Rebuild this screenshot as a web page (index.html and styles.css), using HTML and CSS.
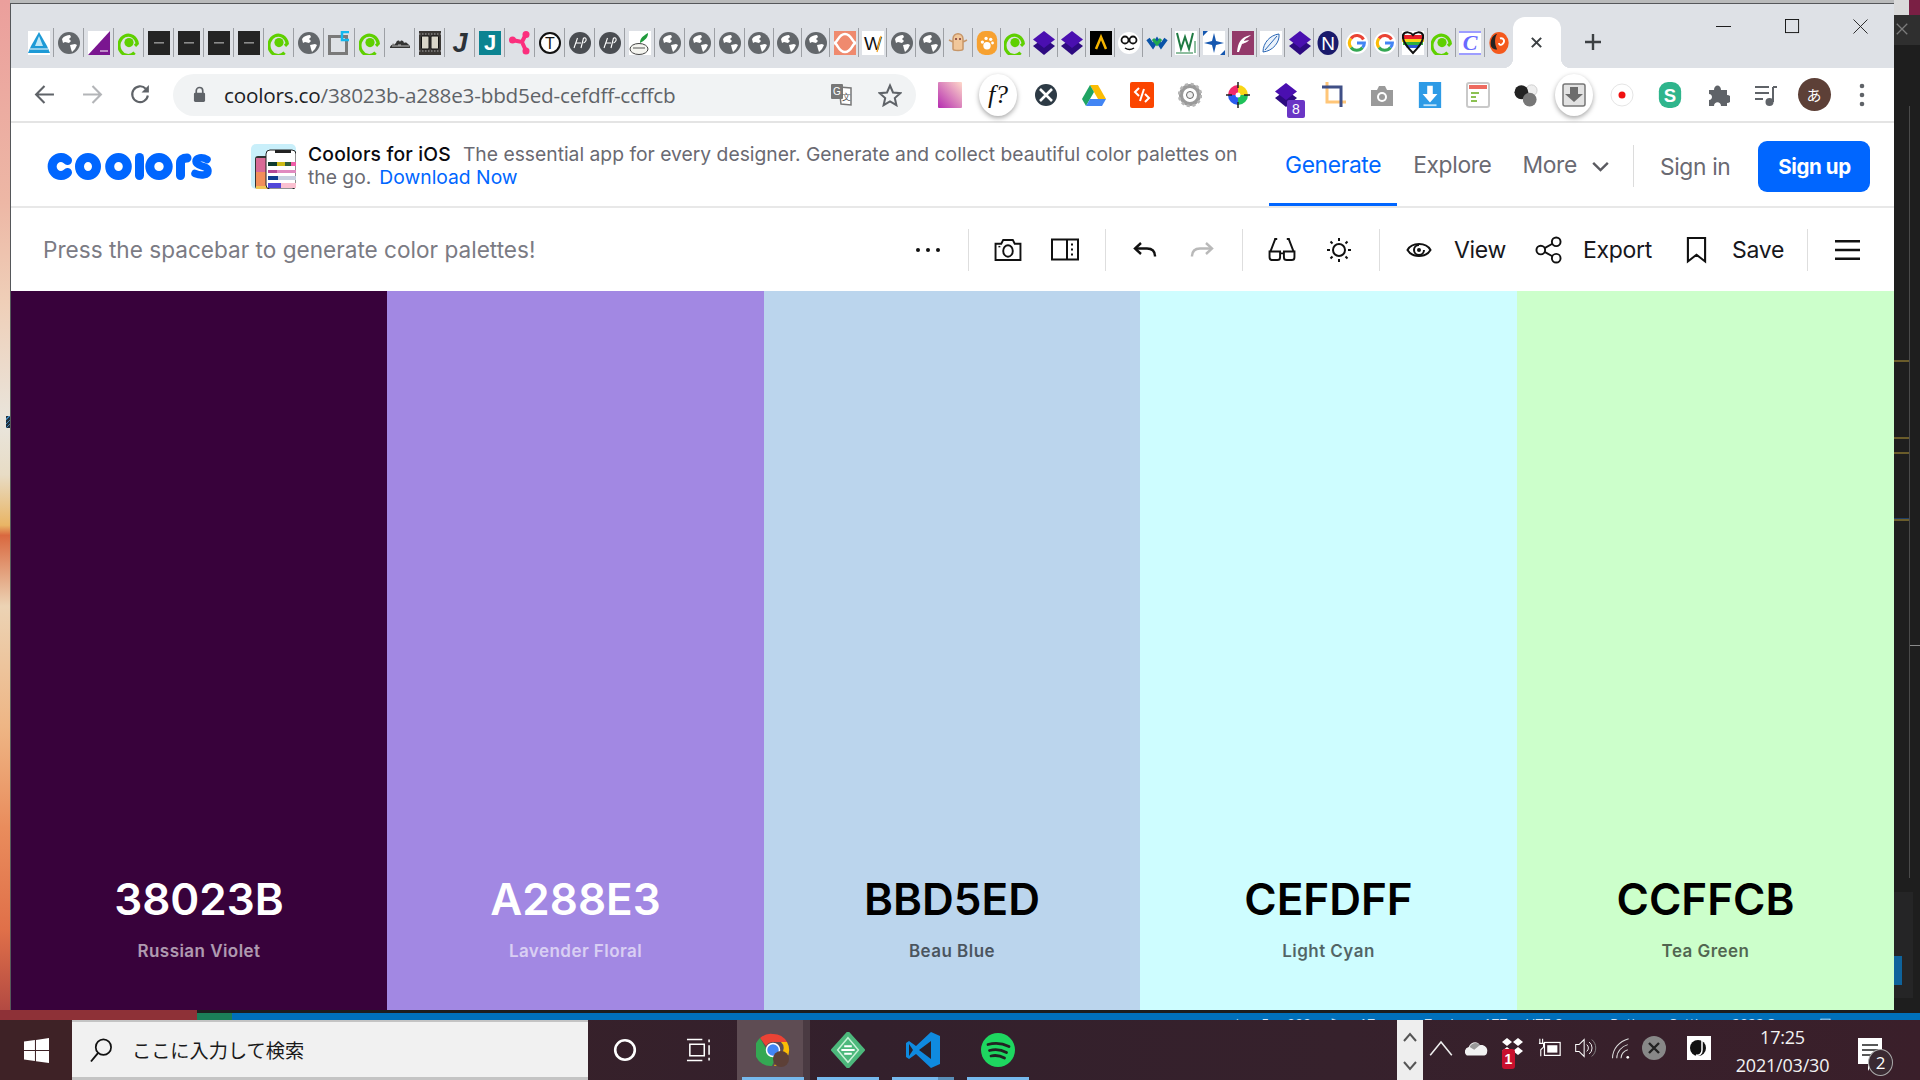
FILE: index.html
```html
<!DOCTYPE html>
<html lang="en">
<head>
<meta charset="utf-8">
<title>Coolors</title>
<link rel="stylesheet" href="styles.css">
</head>
<body>
<svg class="defs" width="0" height="0" aria-hidden="true">
  <defs>
    <symbol id="globe" viewBox="0 0 22 22"><circle cx="11" cy="11" r="11" fill="#63676b"/><path d="M4 7c2-3 5-4 8-4l1 2-2 2 2 2-2 2-4-1-2 1zM12 13l5-1 2 1-2 4-3 3-1-3z" fill="#fff"/></symbol>
    <symbol id="at" viewBox="0 0 22 26"><path d="M17 23.500A10 11 0 1 1 20 13.500L17.500 16" fill="none" stroke="#5fd000" stroke-width="3.400"/><circle cx="11" cy="12.500" r="5" fill="#5fd000"/></symbol>
    <symbol id="dash" viewBox="0 0 22 24"><rect width="22" height="24" fill="#242424"/><rect x="6" y="11" width="10" height="1.600" fill="#8b8b8b"/></symbol>
    <symbol id="stack" viewBox="0 0 22 24"><path d="M11 7 22 15 11 24 0 15z" fill="#2d0a80"/><path d="M11 0 22 8.500 11 17 0 8.500z" fill="#4a0fb0"/></symbol>
    <symbol id="hp" viewBox="0 0 22 22"><circle cx="11" cy="11" r="11" fill="#4a4d52"/><path d="M5 16 8.500 6M7 11h5M12 16 14.500 6M14.500 6c3-1 4 3 0 5" fill="none" stroke="#fff" stroke-width="1.100"/></symbol>
    <symbol id="gg" viewBox="0 0 22 22"><circle cx="11" cy="11" r="11" fill="#fff"/><path d="M17.500 7.500A7.400 7.400 0 0 0 5 6.500" fill="none" stroke="#ea4335" stroke-width="3"/><path d="M5 6.500a7.400 7.400 0 0 0 0 9" fill="none" stroke="#fbbc05" stroke-width="3"/><path d="M5 15.500a7.400 7.400 0 0 0 11.500 0" fill="none" stroke="#34a853" stroke-width="3"/><path d="M16.500 15.500c1.300-1.300 1.900-3 1.900-4.500H11" fill="none" stroke="#4285f4" stroke-width="3"/></symbol>
    <symbol id="drop" viewBox="0 0 22 24"><rect width="22" height="24" fill="#fff"/><path d="M11 1 19 15 22 22 0 22 3 15z" fill="#1d9ad6"/><path d="M11 5 15 15H7z" fill="#bfe8f7"/><path d="M2 18h18" stroke="#fff" stroke-width="1"/></symbol>
    <symbol id="chk" viewBox="0 0 22 24"><rect width="22" height="24" fill="#fff"/><path d="M22 0V24H0z" fill="#7a1690"/><path d="M12 20h8" stroke="#fff"/></symbol>
    <symbol id="sq" viewBox="0 0 22 24"><rect x="1.500" y="5.500" width="17" height="17" fill="none" stroke="#7a7a7a" stroke-width="3"/><path d="M21 1h-7v8h7" fill="none" stroke="#12b8f0" stroke-width="2.500"/></symbol>
  </defs>
</svg>

<div class="screen">
  <div class="upper">
    <div class="wall"></div>
    <div class="middle">
      <div class="behind"></div>
      <main class="window">
        <div class="tabstrip">
          <div class="tab"><svg class="fav"><use href="#drop"/></svg></div>
          <div class="tab"><svg class="fav"><use href="#globe"/></svg></div>
          <div class="tab"><svg class="fav"><use href="#chk"/></svg></div>
          <div class="tab"><svg class="fav"><use href="#at"/></svg></div>
          <div class="tab"><svg class="fav"><use href="#dash"/></svg></div>
          <div class="tab"><svg class="fav"><use href="#dash"/></svg></div>
          <div class="tab"><svg class="fav"><use href="#dash"/></svg></div>
          <div class="tab"><svg class="fav"><use href="#dash"/></svg></div>
          <div class="tab"><svg class="fav"><use href="#at"/></svg></div>
          <div class="tab"><svg class="fav"><use href="#globe"/></svg></div>
          <div class="tab"><svg class="fav"><use href="#sq"/></svg></div>
          <div class="tab"><svg class="fav"><use href="#at"/></svg></div>
          <div class="tab"><svg class="fav" viewBox="0 0 22 24"><path d="M1 17c0-3 2-2 3-5 1 2 2 1 3 0 1-3 3-3 4-1 1-2 3-2 4 1 2-1 3 0 4 1 2 1 2 3 2 4H1z" fill="#333"/><path d="M3 15h17M3 13h3M9 14h3" stroke="#ddd" stroke-width=".8"/></svg></div>
          <div class="tab"><svg class="fav" viewBox="0 0 22 24"><rect width="22" height="24" fill="#3a3734"/><rect x="2.500" y="5" width="7.500" height="13" rx="1" fill="#d9d5c8" stroke="#111"/><rect x="12" y="5" width="7.500" height="13" rx="1" fill="#d9d5c8" stroke="#111"/><path d="M0 3h22M0 20h22" stroke="#aaa" stroke-dasharray="1.500 1.500"/></svg></div>
          <div class="tab"><svg class="fav" viewBox="0 0 22 24"><text class="fb" x="11" y="21" fill="#2c3238" font-size="27" font-style="italic">J</text></svg></div>
          <div class="tab"><svg class="fav" viewBox="0 0 22 24"><rect width="22" height="24" fill="#0b8391"/><text class="fb" x="11" y="19" fill="#fff" font-size="22">J</text></svg></div>
          <div class="tab"><svg class="fav" viewBox="0 0 22 24"><path d="M3 9 13 11 17 3M13 11 17 20" fill="none" stroke="#fb2f7d" stroke-width="4"/><circle cx="3.500" cy="9" r="3.500" fill="#fb2f7d"/><circle cx="17" cy="3.500" r="3.500" fill="#fb2f7d"/><circle cx="17" cy="20" r="3.500" fill="#fb2f7d"/></svg></div>
          <div class="tab"><svg class="fav" viewBox="0 0 22 22"><circle cx="11" cy="11" r="10" fill="#fff" stroke="#111" stroke-width="2"/><text class="fl" x="11" y="17" fill="#111" font-size="16">T</text></svg></div>
          <div class="tab"><svg class="fav"><use href="#hp"/></svg></div>
          <div class="tab"><svg class="fav"><use href="#hp"/></svg></div>
          <div class="tab"><svg class="fav" viewBox="0 0 22 24"><rect width="22" height="24" fill="#fff"/><ellipse cx="10" cy="18" rx="9" ry="5.500" fill="#f5f5f0" stroke="#444"/><path d="M11 12C11 7 14 5 19 2 19 7 16 9 11 12z" fill="#1f9a3b"/><path d="M4 17h12" stroke="#555"/></svg></div>
          <div class="tab"><svg class="fav"><use href="#globe"/></svg></div>
          <div class="tab"><svg class="fav"><use href="#globe"/></svg></div>
          <div class="tab"><svg class="fav"><use href="#globe"/></svg></div>
          <div class="tab tab-n"><svg class="fav"><use href="#globe"/></svg></div>
          <div class="tab tab-n"><svg class="fav"><use href="#globe"/></svg></div>
          <div class="tab tab-n"><svg class="fav"><use href="#globe"/></svg></div>
          <div class="tab tab-n"><svg class="fav" viewBox="0 0 22 24"><rect width="22" height="24" fill="#ef8a6e"/><path d="M0 12C4 12 4 3 11 3s7 9 11 9c-4 0-4 9-11 9S4 12 0 12z" fill="none" stroke="#fff" stroke-width="2.500"/></svg></div>
          <div class="tab tab-n"><svg class="fav" viewBox="0 0 22 24"><rect width="22" height="24" fill="#fff"/><text class="fl" x="11" y="19" fill="#111" font-size="19">W</text><path d="M15 21 19 5" stroke="#f0a020" stroke-width="1.300"/></svg></div>
          <div class="tab tab-n"><svg class="fav"><use href="#globe"/></svg></div>
          <div class="tab tab-n"><svg class="fav"><use href="#globe"/></svg></div>
          <div class="tab tab-n"><svg class="fav" viewBox="0 0 22 24"><path d="M6 18V8c0-7 10-7 10 0v10c0 2-10 2-10 0zM6 11 2 9M16 11l4-2" fill="#f1c79a" stroke="#c79668" stroke-width="1.500"/><circle cx="9" cy="8" r="1" fill="#733"/><circle cx="13" cy="8" r="1" fill="#733"/></svg></div>
          <div class="tab tab-n"><svg class="fav" viewBox="0 0 22 26"><rect width="22" height="26" rx="9" fill="#f7a130"/><circle cx="11" cy="16" r="4" fill="#fff"/><circle cx="6" cy="12" r="1.800" fill="#fff"/><circle cx="10" cy="8" r="1.800" fill="#fff"/><circle cx="15" cy="9" r="1.800" fill="#fff"/><circle cx="17" cy="13" r="1.500" fill="#fff"/></svg></div>
          <div class="tab tab-n"><svg class="fav"><use href="#at"/></svg></div>
          <div class="tab tab-n"><svg class="fav"><use href="#stack"/></svg></div>
          <div class="tab tab-n"><svg class="fav"><use href="#stack"/></svg></div>
          <div class="tab tab-n"><svg class="fav" viewBox="0 0 22 24"><rect width="22" height="24" fill="#000"/><path d="M6 18 11 6 16 18" fill="none" stroke="#f5b400" stroke-width="2.500"/></svg></div>
          <div class="tab tab-n"><svg class="fav" viewBox="0 0 22 22"><circle cx="11" cy="11" r="11" fill="#fff"/><circle cx="7" cy="8" r="3.500" fill="none" stroke="#111" stroke-width="1.800"/><circle cx="15" cy="8" r="3.500" fill="none" stroke="#111" stroke-width="1.800"/><path d="M7 16c3 2 6 2 9 0" fill="none" stroke="#111" stroke-width="1.500"/></svg></div>
          <div class="tab tab-n"><svg class="fav" viewBox="0 0 22 22"><path d="M2 7 7 14 11 8 15 14 20 7" fill="none" stroke="#0a53a8" stroke-width="4"/><path d="M7 7 11 12 15 7" fill="none" stroke="#1fa84f" stroke-width="3"/></svg></div>
          <div class="tab tab-n"><svg class="fav" viewBox="0 0 22 24"><rect width="22" height="24" fill="#fff"/><path d="M2 2 6 18 10 6 14 18 18 2" fill="none" stroke="#1f7a43" stroke-width="2"/><path d="M20 10V22M1 22H18" stroke="#6aa980" stroke-width="1.500"/></svg></div>
          <div class="tab tab-n"><svg class="fav" viewBox="0 0 22 24"><rect width="22" height="24" fill="#fff"/><path d="M11 2 13 10 21 12 13 14 11 22 9 14 1 12 9 10z" fill="#1557b0"/><path d="M0 0h5L0 5zM22 24h-5l5-5z" fill="#1557b0"/></svg></div>
          <div class="tab tab-n"><svg class="fav" viewBox="0 0 22 24"><rect width="22" height="24" fill="#933a6a"/><path d="M5 21C6 12 8 6 19 4 16 7 13 7 12 10l5-1c-2 3-5 3-7 4l-3 8z" fill="#fff"/></svg></div>
          <div class="tab tab-n"><svg class="fav" viewBox="0 0 22 24"><rect width="22" height="24" fill="#fff"/><path d="M3 21C3 12 10 4 19 3c1 8-6 17-16 18z" fill="#eaf2fb" stroke="#2a66b4"/><path d="M5 19 17 5" stroke="#2a66b4"/></svg></div>
          <div class="tab tab-n"><svg class="fav"><use href="#stack"/></svg></div>
          <div class="tab tab-n"><svg class="fav" viewBox="0 0 22 24"><ellipse cx="11" cy="12" rx="10.500" ry="12" fill="#1a1a6b"/><text class="fl" x="11" y="19" fill="#fff" font-size="19">N</text></svg></div>
          <div class="tab tab-n"><svg class="fav"><use href="#gg"/></svg></div>
          <div class="tab tab-n"><svg class="fav"><use href="#gg"/></svg></div>
          <div class="tab tab-n"><svg class="fav" viewBox="0 0 22 24"><rect width="22" height="24" fill="#fff"/><path d="M0 4h22v4H0z" fill="#e8202a"/><path d="M0 8h22v3H0z" fill="#f9d416"/><path d="M1 11h20v3H1z" fill="#2fae3e"/><path d="M3 14h16l-2 3H5z" fill="#2a57d6"/><path d="M1 4C3 0 9 1 11 4c2-3 8-4 10 0 1 5-5 13-10 18C6 17 0 9 1 4z" fill="none" stroke="#111" stroke-width="2"/></svg></div>
          <div class="tab tab-n"><svg class="fav"><use href="#at"/></svg></div>
          <div class="tab tab-n"><svg class="fav" viewBox="0 0 22 24"><rect width="22" height="24" fill="#fff"/><path d="M0 1h22M0 23h22" stroke="#7d7dff" stroke-width="1.500"/><text class="fi" x="11" y="19" fill="#6a6aff" font-size="22" font-style="italic">C</text></svg></div>
          <div class="tab tab-n tab-last"><svg class="fav" viewBox="0 0 22 26"><ellipse cx="11" cy="13" rx="10.500" ry="12" fill="#f4591d"/><path d="M2 14C2 8 5 4 9 3 6 7 6 14 9 20 5 20 2 18 2 14z" fill="#222"/><path d="M12 8c4-1 6 3 3 6-2 2-4 1-4-1" fill="none" stroke="#fff" stroke-width="2"/></svg></div>
          <div class="active-tab"><svg class="x-icon" viewBox="0 0 14 14"><path d="M2 2 12 12M12 2 2 12" stroke="#3c4043" stroke-width="2.200"/></svg></div>
          <svg class="plus" viewBox="0 0 18 18"><path d="M9 1V17M1 9H17" stroke="#3c4043" stroke-width="2.400"/></svg>
          <div class="win-controls">
            <svg class="wc" viewBox="0 0 16 16"><path d="M0 8H16" stroke="#111" stroke-width="1"/></svg>
            <svg class="wc" viewBox="0 0 16 16"><rect x=".5" y=".5" width="14" height="14" fill="none" stroke="#111"/></svg>
            <svg class="wc" viewBox="0 0 16 16"><path d="M.5.500 15.500 15.500M15.500.500 .5 15.500" stroke="#222" stroke-width="1"/></svg>
          </div>
        </div>

        <div class="chromebar">
          <div class="cb"><svg class="nav-ic" viewBox="0 0 20 20"><path d="M19 10H2M10 2 2 10l8 8" fill="none" stroke="#5f6368" stroke-width="2"/></svg></div>
          <div class="cb"><svg class="nav-ic" viewBox="0 0 20 20"><path d="M1 10H18M10 2l8 8-8 8" fill="none" stroke="#b3b5b8" stroke-width="2"/></svg></div>
          <div class="cb"><svg class="nav-ic" viewBox="0 0 20 20"><path d="M17 11A7.500 7.500 0 1 1 15 4.500" fill="none" stroke="#5f6368" stroke-width="2"/><path d="M18 1V8H11z" fill="#5f6368"/></svg></div>
          <div class="omnibox">
            <svg class="lock" viewBox="0 0 14 18"><path d="M3.500 8V5a3.500 3.500 0 0 1 7 0v3" fill="none" stroke="#5f6368" stroke-width="1.800"/><rect x="1" y="7" width="12" height="10" rx="1.500" fill="#5f6368"/></svg>
            <span class="url"><b class="host">coolors.co</b>/38023b-a288e3-bbd5ed-cefdff-ccffcb</span>
            <svg class="omni-ic" viewBox="0 0 22 24"><path d="M9 4 21 5V22L11 21z" fill="#fff" stroke="#777" stroke-width="1.500"/><rect x="1" y="1" width="12" height="15" rx="1" fill="#777"/><text class="fl" x="7" y="12" fill="#fff" font-size="10">G</text><text class="fl" x="16" y="17" fill="#555" font-size="9">文</text></svg>
            <svg class="omni-ic star" viewBox="0 0 24 24"><path d="M12 2.500 15 9.500 22.300 10.200 16.800 15 18.400 22.200 12 18.500 5.600 22.200 7.200 15 1.700 10.200 9 9.500z" fill="none" stroke="#5f6368" stroke-width="2"/></svg>
          </div>
          <div class="ext-row">
            <div class="cb"><svg class="ext" viewBox="0 0 24 26"><defs><linearGradient id="pg" x1="0" y1="1" x2="1" y2="0"><stop offset="0" stop-color="#b52cb0"/><stop offset="1" stop-color="#ffd9c9"/></linearGradient></defs><rect width="24" height="26" rx="1" fill="url(#pg)"/></svg></div>
            <div class="cb"><div class="bubble"><span class="fq">f?</span></div></div>
            <div class="cb"><svg class="ext" viewBox="0 0 24 24"><circle cx="12" cy="12" r="11" fill="#2d3a45"/><path d="M6 6 18 18M18 6 6 18" stroke="#fff" stroke-width="2.600"/></svg></div>
            <div class="cb"><svg class="ext" viewBox="0 0 24 22"><path d="M8 1h8l8 14h-8z" fill="#fbbc04"/><path d="M8 1 0 15l4 7 8-14z" fill="#1fa463"/><path d="M4 22h16l4-7H8z" fill="#4285f4"/></svg></div>
            <div class="cb"><svg class="ext" viewBox="0 0 24 26"><rect width="24" height="26" rx="2" fill="#fb4500"/><path d="M9 6 5 10l4 4M14 7 10 19M15 12l4 4-4 4" fill="none" stroke="#fff" stroke-width="2"/></svg></div>
            <div class="cb"><svg class="ext" viewBox="0 0 24 24"><circle cx="12" cy="12" r="9" fill="none" stroke="#9a9a9a" stroke-width="4"/><circle cx="12" cy="12" r="11" fill="none" stroke="#b5b5b5" stroke-width="2.500" stroke-dasharray="3 2.800"/><circle cx="12" cy="12" r="3.500" fill="#eee" stroke="#666"/></svg></div>
            <div class="cb"><svg class="ext" viewBox="0 0 24 26"><path d="M12 13 12 3A10 10 0 0 1 22 13z" fill="#f9d616"/><path d="M12 13H22A10 10 0 0 1 12 23z" fill="#1fc25a"/><path d="M12 13V23A10 10 0 0 1 2 13z" fill="#2a5cf0"/><path d="M12 13H2A10 10 0 0 1 12 3z" fill="#f02a6a"/><circle cx="12" cy="13" r="2.500" fill="#fff"/><path d="M12 0V6M12 20V26M0 13H6M18 13H24" stroke="#222" stroke-width="1.500"/></svg></div>
            <div class="cb badge-wrap"><svg class="ext" viewBox="0 0 24 24"><use href="#stack"/></svg><span class="badge">8</span></div>
            <div class="cb"><svg class="ext" viewBox="0 0 24 26"><path d="M5 0V20H24" fill="none" stroke="#ffc678" stroke-width="3"/><path d="M0 5H19V25" fill="none" stroke="#3f4f86" stroke-width="3"/></svg></div>
            <div class="cb"><svg class="ext" viewBox="0 0 24 24"><path d="M1 7h6l2-4h6l2 4h6v16H1z" fill="#9a9a9a"/><circle cx="12" cy="14" r="5" fill="#fff"/><circle cx="12" cy="14" r="3" fill="#9a9a9a"/></svg></div>
            <div class="cb"><svg class="ext" viewBox="0 0 24 28"><rect width="24" height="28" fill="#2e9be6"/><path d="M9 4h6v9h5l-8 9-8-9h5z" fill="#fff"/><path d="M5 25h14" stroke="#bfe3fa" stroke-width="2"/></svg></div>
            <div class="cb"><svg class="ext" viewBox="0 0 24 26"><rect x="1" y="1" width="22" height="24" rx="2" fill="#fff" stroke="#c9c9c9" stroke-width="2"/><path d="M3 3h18v4H3z" fill="#ee6a5f"/><path d="M5 11h8M5 15h5M5 19h6" stroke="#8cc152" stroke-width="2"/></svg></div>
            <div class="cb"><svg class="ext" viewBox="0 0 26 26"><circle cx="19" cy="8" r="6" fill="#eee" stroke="#ccc"/><circle cx="8" cy="10" r="7.500" fill="#222"/><circle cx="17" cy="18" r="7.500" fill="#777"/></svg></div>
            <div class="cb"><div class="bubble"><svg class="ext" viewBox="0 0 24 24"><rect x="1" y="1" width="22" height="22" rx="2" fill="#e2e2e2" stroke="#777" stroke-width="1.500"/><path d="M8 4h8v7h5L12 19 3 11h5z" fill="#6c6c6c"/></svg></div></div>
            <div class="cb"><svg class="ext" viewBox="0 0 24 24"><circle cx="12" cy="12" r="11" fill="#fff" stroke="#e5e5e5"/><circle cx="12" cy="12" r="3.500" fill="#f01010"/></svg></div>
            <div class="cb"><svg class="ext" viewBox="0 0 24 28"><rect width="24" height="28" rx="10" fill="#2fb58c"/><text class="fb" x="12" y="21" fill="#fff" font-size="20">S</text></svg></div>
            <div class="cb"><svg class="ext" viewBox="0 0 24 24"><path d="M3 7h5c0-6 7-6 7 0h6v5c6 0 6 8 0 8v3h-6c0-5-7-5-7 0H3v-6c4 0 4-6 0-6z" fill="#5f6368"/></svg></div>
            <div class="cb"><svg class="ext" viewBox="0 0 24 24"><path d="M1 4H15M1 10H15M1 16H9" stroke="#5f6368" stroke-width="2"/><path d="M19 4V19" stroke="#5f6368" stroke-width="2"/><path d="M19 4h4" stroke="#5f6368" stroke-width="2"/><circle cx="15.500" cy="19" r="4" fill="#5f6368"/></svg></div>
            <div class="cb"><div class="avatar">あ</div></div>
            <div class="cb"><svg class="dots" viewBox="0 0 6 24"><circle cx="3" cy="3" r="2.300" fill="#5f6368"/><circle cx="3" cy="12" r="2.300" fill="#5f6368"/><circle cx="3" cy="21" r="2.300" fill="#5f6368"/></svg></div>
          </div>
        </div>

        <header class="site-head">
          <svg class="logo" viewBox="0 0 167 27" role="img" aria-label="coolors">
            <g fill="none" stroke="#0066ff" stroke-width="9" stroke-linecap="round">
              <path d="M22.500 7.500A8.800 9 0 1 0 22.500 19.500"/>
              <ellipse cx="43" cy="13.500" rx="8.500" ry="9"/>
              <ellipse cx="73.500" cy="13.500" rx="8.800" ry="9"/>
              <path d="M94.500 4.500V22.500"/>
              <ellipse cx="114" cy="13.500" rx="9.200" ry="9"/>
              <path d="M135.500 22.500V10C135.500 7 138 5 142 5"/>
              <path d="M162 6.500C157 3.500 151 4.500 151 8.500c0 5.500 12 3.500 12 9.500 0 4.500-7 5-13 2.500" stroke-width="7.500"/>
            </g>
          </svg>
          <svg class="app-ic" viewBox="0 0 45 45">
            <rect width="45" height="45" rx="5" fill="#c9effa"/>
            <rect x="4" y="12" width="14" height="33" rx="3" fill="#333"/>
            <rect x="5" y="14" width="12" height="14" fill="#d86a96"/><rect x="5" y="28" width="12" height="14" fill="#f28e5a"/><rect x="5" y="42" width="12" height="3" fill="#f0c555"/>
            <rect x="15" y="6" width="30" height="39" rx="4" fill="#fff" stroke="#222"/>
            <rect x="24" y="6" width="16" height="3" fill="#222"/>
            <rect x="17" y="18" width="28" height="4" fill="#2f5e3a"/><rect x="17" y="18" width="9" height="4" fill="#0e3b2e"/><rect x="26" y="18" width="8" height="4" fill="#cdbb16"/><rect x="40" y="18" width="5" height="4" fill="#ef5da8"/>
            <rect x="17" y="26" width="28" height="3" fill="#e08ac0"/><rect x="17" y="26" width="9" height="3" fill="#b34794"/>
            <rect x="17" y="32" width="28" height="4" fill="#c7d0e0"/><rect x="17" y="32" width="10" height="4" fill="#103d8f"/>
            <rect x="17" y="39" width="28" height="5" fill="#fac0d0"/><rect x="17" y="39" width="13" height="5" fill="#5147d9"/>
          </svg>
          <p class="promo"><strong class="promo-t">Coolors for iOS</strong>The essential app for every designer. Generate and collect beautiful color palettes on the go.<a class="promo-l">Download Now</a></p>
          <nav class="nav">
            <a class="nav-a current">Generate</a>
            <a class="nav-a">Explore</a>
            <a class="nav-a more">More<svg class="chev" viewBox="0 0 20 12"><path d="M2 2 10 10 18 2" fill="none" stroke="#5a5a60" stroke-width="2.600"/></svg></a>
            <span class="nav-div"></span>
            <a class="signin">Sign in</a>
            <a class="signup">Sign up</a>
          </nav>
        </header>

        <div class="tool">
          <span class="hint">Press the spacebar to generate color palettes!</span>
          <div class="tb"><svg class="t-more" viewBox="0 0 26 6"><circle cx="3" cy="3" r="2" fill="#111"/><circle cx="13" cy="3" r="2" fill="#111"/><circle cx="23" cy="3" r="2" fill="#111"/></svg></div>
          <span class="tdiv"></span>
          <div class="tb"><svg class="t-ic" viewBox="0 0 28 24"><path d="M1 6h6l2-4h10l2 4h6v17H1z" fill="none" stroke="#111" stroke-width="2"/><ellipse cx="14" cy="13.500" rx="5" ry="6" fill="none" stroke="#111" stroke-width="2"/><path d="M4 9h2" stroke="#111" stroke-width="1.500"/></svg></div>
          <div class="tb"><svg class="t-ic" viewBox="0 0 28 22"><rect x="1" y="1" width="26" height="20" fill="none" stroke="#111" stroke-width="2"/><path d="M16 1V21" stroke="#111" stroke-width="2"/><path d="M21 5V7M21 10V12M21 15V17" stroke="#111" stroke-width="2"/></svg></div>
          <span class="tdiv"></span>
          <div class="tb"><svg class="t-ur" viewBox="0 0 24 20"><path d="M8 3 2 8.500 8 14" fill="none" stroke="#111" stroke-width="2.400"/><path d="M3 8.500H14c5 0 8 3 8 8" fill="none" stroke="#111" stroke-width="2.400"/></svg></div>
          <div class="tb"><svg class="t-ur" viewBox="0 0 24 20"><path d="M16 3 22 8.500 16 14" fill="none" stroke="#b9b9b9" stroke-width="2.400"/><path d="M21 8.500H10c-5 0-8 3-8 8" fill="none" stroke="#b9b9b9" stroke-width="2.400"/></svg></div>
          <span class="tdiv"></span>
          <div class="tb"><svg class="t-ic" viewBox="0 0 28 24"><path d="M7 1 2 14M21 1 26 14" fill="none" stroke="#111" stroke-width="2"/><path d="M6 1H9M19 1H22" stroke="#111" stroke-width="2"/><path d="M1 14H12V20C12 22 11 23 9 23H4C2 23 1 22 1 20zM16 14H27V20C27 22 26 23 24 23H19C17 23 16 22 16 20zM12 16H16" fill="none" stroke="#111" stroke-width="2"/></svg></div>
          <div class="tb"><svg class="t-sun" viewBox="0 0 26 26"><circle cx="13" cy="13" r="6" fill="none" stroke="#111" stroke-width="2"/><path d="M13 1V4M13 22V25M1 13H4M22 13H25M4.500 4.500 6.500 6.500M19.500 19.500 21.500 21.500M4.500 21.500 6.500 19.500M19.500 6.500 21.500 4.500" stroke="#111" stroke-width="2"/></svg></div>
          <span class="tdiv"></span>
          <div class="tb"><svg class="t-eye" viewBox="0 0 26 20"><path d="M1.500 10C6 2 20 2 24.500 10 20 18 6 18 1.500 10z" fill="none" stroke="#111" stroke-width="2"/><path d="M18 10a5 5 0 1 1-5-5" fill="none" stroke="#111" stroke-width="2"/><circle cx="13" cy="10" r="2" fill="#111"/></svg></div>
          <span class="tlabel">View</span>
          <div class="tb"><svg class="t-share" viewBox="0 0 28 28"><circle cx="6" cy="14" r="4.500" fill="none" stroke="#111" stroke-width="2"/><circle cx="22" cy="5.500" r="4.500" fill="none" stroke="#111" stroke-width="2"/><circle cx="22" cy="22.500" r="4.500" fill="none" stroke="#111" stroke-width="2"/><path d="M10 12 18 7.500M10 16 18 20.500" stroke="#111" stroke-width="2"/></svg></div>
          <span class="tlabel wide">Export</span>
          <div class="tb"><svg class="t-book" viewBox="0 0 22 28"><path d="M2 1.500H20V26L11 19 2 26z" fill="none" stroke="#111" stroke-width="2.200"/></svg></div>
          <span class="tlabel last">Save</span>
          <span class="tdiv"></span>
          <div class="tb"><svg class="t-menu" viewBox="0 0 26 22"><path d="M0 2H26M0 11H26M0 20H26" stroke="#111" stroke-width="2.600"/></svg></div>
        </div>

        <section class="palette">
          <div class="swatch s1"><span class="hex">38023B</span><span class="cname">Russian Violet</span></div>
          <div class="swatch s2"><span class="hex">A288E3</span><span class="cname">Lavender Floral</span></div>
          <div class="swatch s3 dark"><span class="hex">BBD5ED</span><span class="cname">Beau Blue</span></div>
          <div class="swatch s4 dark"><span class="hex">CEFDFF</span><span class="cname">Light Cyan</span></div>
          <div class="swatch s5 dark"><span class="hex">CCFFCB</span><span class="cname">Tea Green</span></div>
        </section>
      </main>
    </div>
    <aside class="ide">
      <div class="ide-top"></div>
      <svg class="ide-x" viewBox="0 0 16 16"><path d="M2 2 14 14M14 2 2 14" stroke="#7c7c7c" stroke-width="1.500"/></svg>
      <div class="ide-rule r1"></div><div class="ide-rule r2"></div><div class="ide-rule r3"></div><div class="ide-rule r4"></div>
      <div class="ide-v"></div>
      <div class="ide-h"></div>
      <div class="ide-panel"><div class="ide-btn"></div></div>
    </aside>
  </div>
  <div class="stripe">
    <div class="st-red"></div>
    <div class="st-green"></div>
    <div class="st-blue"><span class="st-text">⚠ 5 999 ⚑ 17 ▲ 7 Ln 177 UTF-8 ⊕ Retina Setting 2022.3 × ☐</span></div>
  </div>
  <footer class="taskbar">
    <div class="start"><svg class="winlogo" viewBox="0 0 24 24"><path d="M0 3.400 10.500 2V11.500H0zM11.500 1.800 24 0V11.500H11.500zM0 12.500H10.500V22L0 20.600zM11.500 12.500H24V24L11.500 22.200z" fill="#fff"/></svg></div>
    <div class="search">
      <svg class="mag" viewBox="0 0 24 26"><circle cx="14" cy="10" r="8" fill="none" stroke="#111" stroke-width="1.800"/><path d="M8.500 16 1 25" stroke="#111" stroke-width="2"/></svg>
      <span class="s-text">ここに入力して検索</span>
    </div>
    <div class="tk"><svg class="cortana" viewBox="0 0 24 24"><circle cx="12" cy="12" r="9.800" fill="none" stroke="#fff" stroke-width="2.600"/></svg></div>
    <div class="tk wider"><svg class="tview" viewBox="0 0 26 26"><path d="M1 2H17M1 24H17M4 7H19V19H4z" fill="none" stroke="#fff" stroke-width="1.600"/><path d="M24 2V5M24 8V18M24 21V24" stroke="#fff" stroke-width="1.600"/></svg></div>
    <div class="app active">
      <svg class="app-ic2" viewBox="0 0 34 34">
        <path d="M17 1A16 16 0 0 1 31 9H17a8 8 0 0 0-7 4L4 5A16 16 0 0 1 17 1z" fill="#ea4335"/>
        <path d="M31 9A16 16 0 0 1 18 33l7-12a8 8 0 0 0 0-12z" fill="#fbbc05"/>
        <path d="M4 5 11 17a8 8 0 0 0 9 7L16 33A16 16 0 0 1 4 5z" fill="#34a853"/>
        <circle cx="17" cy="17" r="6.500" fill="#4285f4" stroke="#fff" stroke-width="1.500"/>
        <circle cx="25" cy="26" r="8" fill="#5d4037"/>
      </svg>
    </div>
    <div class="app"><svg class="app-ic2" viewBox="0 0 34 38"><path d="M17 0 34 19 17 38 0 19z" fill="#4db87c" stroke="#4db87c" stroke-width="2" stroke-linejoin="round"/><path d="M17 6 28 19 17 32 6 19z" fill="none" stroke="#c9f2d8" stroke-width="1.500"/><path d="M10 19H24M13 15H21M13 23H21" stroke="#fff" stroke-width="2"/></svg></div>
    <div class="app split"><svg class="app-ic2" viewBox="0 0 34 36"><path d="M25 0 34 4V32L25 36 10 22 3 27 0 25V11L3 9 10 14z" fill="#0f8adf"/><path d="M25 9V27L13 18z" fill="#2b2028"/><path d="M3 12 7 18 3 24z" fill="#2b2028"/></svg></div>
    <div class="app"><svg class="app-ic2" viewBox="0 0 34 34"><circle cx="17" cy="17" r="17" fill="#1ed760"/><path d="M7 11.500C14 9.500 21 10 28 13.500M8.500 17.500C14 16 20 16.500 25.500 19.500M10 23C14.500 22 19 22.500 23.500 25" fill="none" stroke="#222" stroke-width="2.800" stroke-linecap="round"/></svg></div>
    <div class="scrollbox">
      <svg class="sb-ch" viewBox="0 0 14 10"><path d="M1 9 7 2 13 9" fill="none" stroke="#555" stroke-width="2"/></svg>
      <svg class="sb-ch" viewBox="0 0 14 10"><path d="M1 1 7 8 13 1" fill="none" stroke="#555" stroke-width="2"/></svg>
    </div>
    <div class="tray w36"><svg class="tr" viewBox="0 0 20 14"><path d="M1 13 10 2 19 13" fill="none" stroke="#eee" stroke-width="1.300"/></svg></div>
    <div class="tray w36"><svg class="tr" viewBox="0 0 26 18"><path d="M2 17a5 5 0 0 1 2-9C6 2 14 1 16 6c5-1 9 3 8 7 0 2-1 4-3 4z" fill="#f2f2f2"/><path d="M5 8C7 3 14 2 16 6L10 11z" fill="#9a9a9a"/></svg></div>
    <div class="tray w36"><svg class="tr" viewBox="0 0 24 22"><path d="M6 1 11 5 6 9 1 5zM17 1 22 5 17 9 12 5zM6 10 11 14 6 18 1 14zM17 10 22 14 17 18 12 14z" fill="#fff"/></svg><span class="tr-badge">1</span></div>
    <div class="tray w37"><svg class="tr" viewBox="0 0 26 22"><rect x="7" y="5" width="17" height="14" fill="none" stroke="#fff" stroke-width="1.300"/><rect x="10" y="8" width="11" height="8" fill="#fff"/><path d="M5 1V6M2 1V6M1 6H6V10L3 13V20" fill="none" stroke="#fff" stroke-width="1.200"/></svg></div>
    <div class="tray w33"><svg class="tr" viewBox="0 0 24 26"><path d="M1 9H5L11 3V23L5 17H1z" fill="none" stroke="#fff" stroke-width="1.200"/><path d="M14 9a5 5 0 0 1 0 8M17 6a9 9 0 0 1 0 14" fill="none" stroke="#fff" stroke-width="1.100"/><path d="M20 3a13 13 0 0 1 0 20" fill="none" stroke="#888" stroke-width="1.100"/></svg></div>
    <div class="tray w39"><svg class="tr" viewBox="0 0 24 26"><path d="M2 25C2 14 10 5 21 2M7 25c0-8 6-14 13-16M12 25c0-5 4-9 8-10" fill="none" stroke="#ddd" stroke-width="1.200"/><circle cx="20" cy="24" r="1.600" fill="#fff"/></svg></div>
    <div class="tray w28"><svg class="tr-x" viewBox="0 0 24 24"><circle cx="12" cy="12" r="12" fill="#888"/><path d="M7 7 17 17M17 7 7 17" stroke="#222" stroke-width="2.400"/></svg></div>
    <div class="tray w62"><svg class="tr-j" viewBox="0 0 24 24"><rect width="24" height="24" fill="#fff"/><circle cx="11" cy="12" r="8" fill="#111"/><path d="M15 4V14C15 18 12 20 9 19" fill="none" stroke="#fff" stroke-width="1.500"/></svg></div>
    <div class="clock"><span class="c-line">17:25</span><span class="c-line">2021/03/30</span></div>
    <div class="notify">
      <svg class="note" viewBox="0 0 24 34"><path d="M0 0H24V26H14L10 33V26H0z" fill="#fff"/><path d="M4 7H20M4 12H20M4 17H20" stroke="#222" stroke-width="1.300"/></svg>
      <span class="n-count">2</span>
    </div>
  </footer>
</div>
</body>
</html>
```

FILE: styles.css
```css
* { box-sizing: border-box; }
html, body { margin: 0; padding: 0; }
body { width: 1920px; height: 1080px; overflow: hidden; font-family: Inter, "Noto Sans", sans-serif; background: #222; }
.defs { position: absolute; }
.screen { width: 1920px; height: 1080px; display: flex; flex-direction: column; }
.upper { display: flex; height: 1010px; flex: none; }
.wall { width: 10px; flex: none; position: relative; background: linear-gradient(180deg, #eb9f9c 0, #edb7a5 20%, #efcfb8 30%, #e9e5dc 42%, #e8dcc5 47%, #e9b565 52%, #d9683f 53%, #ecd3b4 60%, #eeb584 72%, #e98c5c 82%, #e07049 92%, #b34a42 100%); }
.wall::after { content: ""; position: absolute; left: 6px; top: 416px; width: 4px; height: 12px; background: repeating-linear-gradient(135deg, #22303c 0, #22303c 2px, #3d84b8 2px, #3d84b8 3px); }
.middle { width: 1884px; flex: none; display: flex; flex-direction: column; }
.behind { height: 3px; flex: none; background: #b9babb; }
.window { flex: 1; min-height: 0; display: flex; flex-direction: column; border: 1px solid #55575a; border-bottom: 0; border-right-width: 0; background: #fff; width: 1884px; }

/* tab strip */
.tabstrip { height: 64px; flex: none; background: #dee1e6; display: flex; align-items: flex-end; padding-left: 13px; position: relative; }
.tab { width: 30.05px; height: 51px; flex: none; display: flex; align-items: center; justify-content: center; position: relative; }
.tab::after { content: ""; position: absolute; right: 0; top: 11px; height: 29px; width: 1px; background: #9da0a5; }
.tab-n { width: 28.45px; }
.tab-last::after { display: none; }
.fav { width: 22px; height: 24px; display: block; }
.fi { font-family: "Liberation Serif", serif; font-weight: 700; text-anchor: middle; }
.fl { font-family: "Liberation Sans", sans-serif; text-anchor: middle; }
.fb { font-family: "Liberation Sans", sans-serif; font-weight: 700; text-anchor: middle; }
.active-tab { width: 48px; height: 51px; flex: none; background: #fff; border-radius: 12px 12px 0 0; display: flex; align-items: center; justify-content: center; position: relative; }
.active-tab::before, .active-tab::after { content: ""; position: absolute; bottom: 0; width: 10px; height: 10px; }
.active-tab::before { left: -10px; background: radial-gradient(circle at 0 0, transparent 10px, #fff 10.5px); }
.active-tab::after { right: -10px; background: radial-gradient(circle at 100% 0, transparent 10px, #fff 10.5px); }
.x-icon { width: 13px; height: 13px; }
.plus { width: 18px; height: 18px; margin: 0 0 17px 23px; flex: none; }
.win-controls { position: absolute; right: 0; top: 15px; display: flex; }
.wc { width: 15px; height: 15px; display: block; }
.wc:nth-child(1) { margin-right: 54px; }
.wc:nth-child(2) { margin-right: 53px; }
.wc:nth-child(3) { margin-right: 26px; }

/* chrome toolbar */
.chromebar { height: 55px; flex: none; display: flex; align-items: center; padding-left: 9px; border-bottom: 2px solid #e4e4e4; background: #fff; }
.cb { width: 48px; height: 48px; flex: none; display: flex; align-items: center; justify-content: center; position: relative; }
.nav-ic { width: 21px; height: 21px; }
.omnibox { width: 743px; height: 42px; margin-left: 9px; flex: none; background: #f1f3f4; border-radius: 21px; display: flex; align-items: center; padding-left: 20px; }
.lock { width: 13px; height: 17px; flex: none; }
.url { font-family: "Open Sans", "Noto Sans", sans-serif; font-size: 20.700px; color: #5f6368; margin-left: 18px; width: 602px; flex: none; white-space: nowrap; letter-spacing: -.2px; }
.host { font-weight: 400; color: #202124; }
.omni-ic { width: 22px; height: 24px; flex: none; margin-left: 4px; }
.star { margin-left: 26px; width: 24px; }
.ext-row { display: flex; margin-left: 10px; }
.ext { width: 24px; height: 26px; display: block; }
.bubble { width: 38px; height: 42px; border-radius: 50%; background: #fff; box-shadow: 0 2px 5px rgba(0,0,0,.35); display: flex; align-items: center; justify-content: center; }
.fq { font-family: "Liberation Serif", serif; font-style: italic; font-size: 26px; color: #111; }
.badge { position: absolute; left: 25px; top: 29px; width: 18px; height: 18px; background: #6a35c5; color: #fff; font: 14px/18px "Liberation Sans", sans-serif; text-align: center; border-radius: 2px; }
.avatar { width: 33px; height: 33px; border-radius: 50%; background: #5d4037; color: #fff; font: 15px/33px "Noto Sans CJK JP", sans-serif; text-align: center; }
.dots { width: 6px; height: 24px; }

/* site header */
.site-head { height: 85px; flex: none; display: flex; align-items: center; padding: 3px 0 0 34px; border-bottom: 2px solid #e8e8e8; background: #fff; }
.logo { width: 167px; height: 27px; flex: none; }
.app-ic { width: 45px; height: 45px; flex: none; margin-left: 39px; }
.promo { width: 945px; margin: 0 0 0 12px; flex: none; font-size: 19.300px; line-height: 23px; color: #6a6a72; }
.promo-t { font-weight: 500; color: #0a0a10; margin-right: 12px; letter-spacing: .19px; }
.promo-l { color: #0066ff; margin-left: 8px; }
.nav { display: flex; align-items: center; align-self: stretch; margin-left: 16px; }
.nav-a { font-size: 22.800px; color: #6a6a72; padding: 0 15px 0 16px; align-self: stretch; border-bottom: 3px solid transparent; letter-spacing: -.35px; display: flex; align-items: center; }
.nav-a.current { color: #0066ff; border-bottom-color: #0066ff; padding-right: 16px; }
.chev { width: 19px; height: 11px; margin: 4px 0 0 14px; }
.nav-div { width: 1px; height: 42px; background: #dcdcdc; margin: 0 26px 0 8px; }
.signin { font-size: 22.800px; color: #6a6a72; letter-spacing: -.35px; }
.signup { width: 112px; height: 51px; margin-left: 28px; background: #0066ff; color: #fff; border-radius: 9px; font-size: 20.500px; font-weight: 700; line-height: 51px; text-align: center; letter-spacing: -.4px; }

/* tool row */
.tool { height: 83px; flex: none; display: flex; align-items: center; padding-left: 32px; background: #fff; }
.hint { flex: 1; font-size: 22.600px; color: #7b7b84; white-space: nowrap; margin-top: -1px; }
.tb { width: 57px; height: 42px; flex: none; display: flex; align-items: center; justify-content: center; }
.tdiv { width: 1px; height: 42px; flex: none; background: #dedede; margin: 0 11px; }
.t-more { width: 26px; height: 6px; }
.t-ic { width: 28px; height: 23px; }
.t-ur { width: 24px; height: 20px; }
.t-sun { width: 26px; height: 26px; }
.t-eye { width: 26px; height: 20px; }
.t-share { width: 27px; height: 28px; }
.t-book { width: 21px; height: 28px; }
.t-menu { width: 25px; height: 22px; }
.tlabel { font-size: 23px; color: #17171c; margin: 0 14px 0 6px; letter-spacing: -.3px; }
.tlabel.wide { margin-right: 16px; }
.tlabel.last { margin: 0 12px 0 7px; }
.tool .tb:last-child { margin-right: 18px; }

/* palette */
.palette { flex: 1; min-height: 0; display: grid; grid-template-columns: 376px 377px 376px 377px 377px; }
.swatch { display: flex; flex-direction: column; align-items: center; justify-content: flex-end; padding-bottom: 49px; color: #fff; }
.s1 { background: #38023b; }
.s2 { background: #a288e3; }
.s3 { background: #bbd5ed; }
.s4 { background: #cefdff; }
.s5 { background: #ccffcb; }
.dark { color: #000; }
.hex { font-size: 44px; font-weight: 600; line-height: 50px; }
.cname { font-size: 17px; font-weight: 600; line-height: 20px; margin-top: 17px; opacity: .6; letter-spacing: .45px; }

/* ide behind */
.ide { width: 26px; flex: none; position: relative; background: #1e1e1e; overflow: hidden; }
.ide-top { height: 45px; background: linear-gradient(180deg, #dadada 0, #dadada 15px, #2f2f2f 15px); }
.ide-top::after { content: ""; position: absolute; left: 15px; top: 0; width: 11px; height: 15px; background: #7a1f44; }
.ide-x { position: absolute; left: 1px; top: 22px; width: 14px; height: 14px; }
.ide-rule { position: absolute; left: 0; width: 15px; height: 2px; background: #6a5c2a; }
.r1 { top: 360px; } .r2 { top: 437px; } .r3 { top: 452px; } .r4 { top: 518px; border-top: 1px solid #1f3f66; height: 3px; }
.ide-v { position: absolute; left: 15px; top: 106px; width: 1px; height: 772px; background: #4a4a4a; }
.ide-h { position: absolute; left: 16px; top: 645px; width: 10px; height: 1px; background: #8a8a8a; }
.ide-panel { position: absolute; left: 0; top: 892px; width: 19px; height: 106px; background: #252526; }
.ide-btn { width: 8px; height: 29px; margin-top: 64px; background: #0e639c; }

/* status stripe */
.stripe { height: 10px; flex: none; display: flex; }
.st-red { width: 197px; flex: none; background: #8e3137; }
.st-green { width: 35px; flex: none; background: #1b7f58; border-top: 3px solid #1d1d1e; }
.st-blue { flex: 1; background: #0070bb; overflow: hidden; text-align: right; padding-right: 88px; border-top: 3px solid #1d1d1e; }
.st-text { font: 14px/22px "Open Sans", sans-serif; color: #cfe5f5; word-spacing: 14px; white-space: nowrap; display: block; }

/* task bar */
.taskbar { height: 60px; flex: none; display: flex; background: linear-gradient(90deg, #3d2227 0, #33202c 45%, #36212c 70%, #3a1f2a 100%); }
.start { width: 72px; flex: none; display: flex; align-items: center; justify-content: center; background: #3e2226; }
.winlogo { width: 25px; height: 25px; }
.search { width: 516px; flex: none; background: #f1f1f1; border-top: 2px solid #c4c4c4; border-bottom: 3px solid #c4c4c4; display: flex; align-items: center; padding-left: 18px; }
.mag { width: 23px; height: 26px; flex: none; }
.s-text { font: 19.200px "Noto Sans CJK JP", sans-serif; color: #1a1a1a; margin-left: 19px; }
.tk { width: 73px; flex: none; display: flex; align-items: center; justify-content: center; }
.tk.wider { width: 74px; }
.cortana { width: 24px; height: 24px; }
.tview { width: 25px; height: 26px; }
.app { width: 75px; flex: none; display: flex; align-items: center; justify-content: center; position: relative; }
.app::after { content: ""; position: absolute; left: 7px; right: 6px; bottom: 0; height: 3px; background: #76b9ed; }
.active { background: linear-gradient(90deg, transparent 0, transparent 2px, #5e4c53 2px, #5e4c53 68px, #4a3a42 68px); }
.split::after { background: linear-gradient(90deg, #76b9ed 0, #76b9ed 75%, #5a8fb8 75%); }
.app-ic2 { width: 34px; height: 36px; }
.scrollbox { width: 26px; flex: none; margin-left: 362px; background: #eeeeee; display: flex; flex-direction: column; align-items: center; justify-content: space-between; padding: 12px 0 9px; }
.sb-ch { width: 14px; height: 10px; }
.tray { flex: none; display: flex; align-items: center; justify-content: center; position: relative; }
.w36 { width: 36px; } .w37 { width: 37px; } .w33 { width: 33px; } .w39 { width: 39px; } .w28 { width: 28px; } .w62 { width: 62px; }
.tr { width: 24px; height: 22px; margin-top: -4px; }
.tr-x { width: 24px; height: 24px; margin-top: -4px; }
.tr-j { width: 24px; height: 24px; margin-top: -4px; }
.tr-badge { position: absolute; left: 7px; top: 29px; width: 13px; height: 20px; border-radius: 3px; background: #c8102e; color: #fff; font: 700 14px/20px "Liberation Sans", sans-serif; text-align: center; }
.clock { width: 105px; flex: none; display: flex; flex-direction: column; align-items: center; justify-content: center; padding-top: 2px; color: #f2f2f2; font: 18px/28px "Open Sans", sans-serif; letter-spacing: -.2px; }
.notify { width: 70px; flex: none; position: relative; display: flex; justify-content: center; padding-top: 18px; }
.note { width: 24px; height: 34px; }
.n-count { position: absolute; left: 33px; top: 29px; width: 25px; height: 27px; border-radius: 50%; background: #3a2a32; border: 1px solid #aaa; color: #fff; font: 17px/25px "Open Sans", sans-serif; text-align: center; }
```
